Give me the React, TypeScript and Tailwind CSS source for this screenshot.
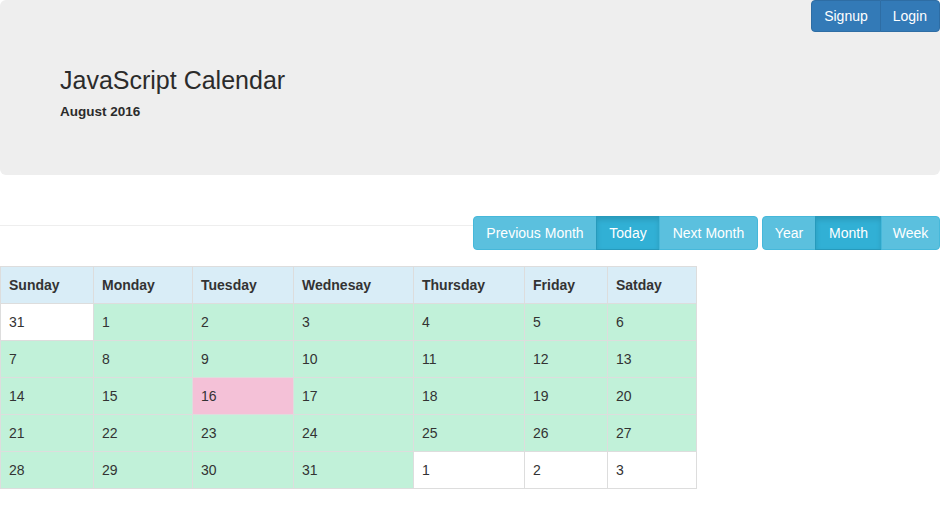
import React from 'react'

type Cell = { day: number; tone: 'white' | 'green' | 'pink' }

const headers = [
  { name: 'Sunday', w: 'w-[93px]' },
  { name: 'Monday', w: 'w-[99px]' },
  { name: 'Tuesday', w: 'w-[101px]' },
  { name: 'Wednesay', w: 'w-[120px]' },
  { name: 'Thursday', w: 'w-[111px]' },
  { name: 'Friday', w: 'w-[83px]' },
  { name: 'Satday', w: 'w-[89px]' },
]

// build the august 2016 grid: 31 from july, then 1..31, then 1..3 of september
function buildWeeks(): Cell[][] {
  const cells: Cell[] = [{ day: 31, tone: 'white' }]
  for (let d = 1; d <= 31; d++) {
    cells.push({ day: d, tone: d === 16 ? 'pink' : 'green' })
  }
  for (let d = 1; d <= 3; d++) cells.push({ day: d, tone: 'white' })
  const weeks: Cell[][] = []
  for (let i = 0; i < cells.length; i += 7) weeks.push(cells.slice(i, i + 7))
  return weeks
}

const toneClass = {
  white: 'bg-white',
  green: 'bg-[#c1f1d9]',
  pink: 'bg-[#f4c1d7]',
}

function InfoButton({ label, w, active, first, last }: { label: string; w: string; active?: boolean; first?: boolean; last?: boolean }) {
  return (
    <button
      className={
        w +
        ' h-[34px] text-[14px] text-white border ' +
        (active
          ? 'bg-[#31b0d5] border-[#269abc] shadow-[inset_0_3px_5px_rgba(0,0,0,0.125)] '
          : 'bg-[#5bc0de] border-[#46b8da] ') +
        (first ? 'rounded-l-[4px] ' : '-ml-px ') +
        (last ? 'rounded-r-[4px]' : '')
      }
    >
      {label}
    </button>
  )
}

export default function App() {
  const weeks = buildWeeks()

  return (
    <div className="w-[947px] h-[508px] bg-white text-[#333] font-['Liberation_Sans',Arial,sans-serif] text-[14px]">
      <div className="w-[940px]">
        <div className="relative h-[175px] bg-[#eeeeee] rounded-[6px] pl-[60px] pt-[66px]">
          <h1 className="text-[25px] leading-[28px] text-[#2b2b2b]">JavaScript Calendar</h1>
          <div className="mt-[10px] text-[13.5px] leading-[16px] font-bold text-[#2b2b2b]">August 2016</div>

          <div className="absolute top-0 right-0 flex">
            <button className="h-[32px] px-3 text-[14px] text-white bg-[#337ab7] border border-[#2e6da4] rounded-bl-[4px] rounded-tl-[4px]">
              Signup
            </button>
            <button className="-ml-px h-[32px] px-3 text-[14px] text-white bg-[#337ab7] border border-[#2e6da4] rounded-br-[4px] rounded-tr-[4px]">
              Login
            </button>
          </div>
        </div>

        <div className="mt-[41px] flex items-start">
          <div className="flex-1 mt-[9px] border-t border-[#eeeeee]" />
          <div className="flex">
            <InfoButton label="Previous Month" w="w-[124px]" first />
            <InfoButton label="Today" w="w-[64px]" active />
            <InfoButton label="Next Month" w="w-[99px]" last />
          </div>
          <div className="flex ml-[4px]">
            <InfoButton label="Year" w="w-[54px]" first />
            <InfoButton label="Month" w="w-[67px]" active />
            <InfoButton label="Week" w="w-[59px]" last />
          </div>
        </div>

        <table className="mt-[16px] border-collapse border border-[#dddddd] table-fixed w-[697px]">
          <thead>
            <tr className="bg-[#d9edf7]">
              {headers.map((h) => (
                <th key={h.name} className={h.w + ' h-[37px] px-2 text-left font-bold border border-[#dddddd]'}>
                  {h.name}
                </th>
              ))}
            </tr>
          </thead>
          <tbody>
            {weeks.map((week, wi) => (
              <tr key={wi}>
                {week.map((c, ci) => (
                  <td key={ci} className={toneClass[c.tone] + ' h-[37px] px-2 border border-[#dddddd]'}>
                    {c.day}
                  </td>
                ))}
              </tr>
            ))}
          </tbody>
        </table>
      </div>
    </div>
  )
}
